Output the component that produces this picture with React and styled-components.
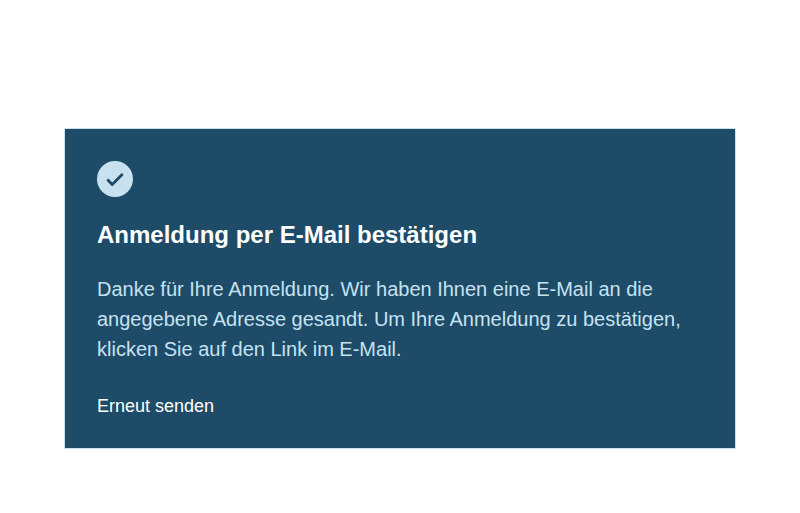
import React from "react";
import styled, { createGlobalStyle } from "styled-components";

const GlobalStyle = createGlobalStyle`
  *, *::before, *::after { box-sizing: border-box; }
  body {
    margin: 0;
    background: #ffffff;
    font-family: "Liberation Sans", Arial, sans-serif;
  }
`;

const Page = styled.main`
  padding: 128px 64px 64px;
`;

const Card = styled.section`
  padding: 32px;
  border: 1px solid #c8e1ee;
  background: #1d4b68;
  height: 321px;
`;

const StatusBadge = styled.span`
  display: flex;
  align-items: center;
  justify-content: center;
  width: 36px;
  height: 36px;
  border-radius: 50%;
  background: #c8e1f0;
  color: #1d4b68;
`;

const Title = styled.h1`
  margin: 20px 0 0;
  color: #ffffff;
  font-size: 24px;
  line-height: 36px;
  font-weight: 700;
`;

const Message = styled.p`
  margin: 21px 0 0;
  color: #c6e2f1;
  font-size: 20px;
  line-height: 30px;
`;

const ResendButton = styled.button`
  display: block;
  margin: 29px 0 0;
  padding: 0;
  border: 0;
  background: none;
  color: #ffffff;
  font-family: inherit;
  font-size: 18px;
  line-height: 27px;
  cursor: pointer;
`;

export default function App() {
  return (
    <>
      <GlobalStyle />
      <Page>
        <Card>
          <StatusBadge>
            <svg width="24" height="24" viewBox="0 0 24 24" fill="none" stroke="currentColor" strokeWidth="2.9" strokeLinecap="round" strokeLinejoin="round" aria-hidden="true">
              <path d="M5.1 13.3l4.1 4.2L18.9 7.8" />
            </svg>
          </StatusBadge>
          <Title>Anmeldung per E-Mail bestätigen</Title>
          <Message>
            Danke für Ihre Anmeldung. Wir haben Ihnen eine E-Mail an die
            angegebene Adresse gesandt. Um Ihre Anmeldung zu bestätigen,
            klicken Sie auf den Link im E-Mail.
          </Message>
          <ResendButton type="button">Erneut senden</ResendButton>
        </Card>
      </Page>
    </>
  );
}
